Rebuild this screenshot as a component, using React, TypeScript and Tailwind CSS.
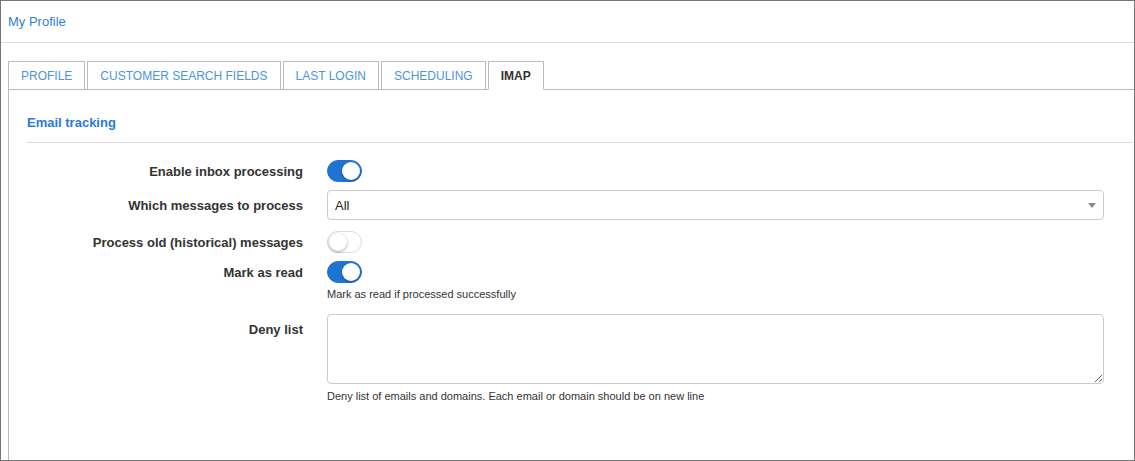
import { useState } from "react";

const tabs = ["Profile", "Customer search fields", "Last login", "Scheduling", "IMAP"];

function Toggle({ on, onClick }: { on: boolean; onClick: () => void }) {
  return (
    <button
      type="button"
      onClick={onClick}
      className={
        on
          ? "relative w-[35px] h-[22px] rounded-full bg-[#1f73d1] border border-[#1f73d1]"
          : "relative w-[35px] h-[22px] rounded-full bg-white border border-[#dcdcdc]"
      }
    >
      <span
        className={
          on
            ? "absolute top-[1px] right-[1px] w-[18px] h-[18px] rounded-full bg-white shadow-[0_1px_2px_rgba(0,0,0,0.3)]"
            : "absolute top-[1px] left-[1px] w-[18px] h-[18px] rounded-full bg-white shadow-[0_1px_3px_rgba(0,0,0,0.35)]"
        }
      />
    </button>
  );
}

function Label({ children }: { children: React.ReactNode }) {
  return (
    <div className="w-[276px] shrink-0 text-right text-[13px] font-bold text-[#333] pt-[2px]">
      {children}
    </div>
  );
}

export default function App() {
  const [active, setActive] = useState("IMAP");
  const [inbox, setInbox] = useState(true);
  const [old, setOld] = useState(false);
  const [markRead, setMarkRead] = useState(true);

  return (
    <div
      className="w-[1135px] h-[461px] border border-[#777] bg-white flex flex-col overflow-hidden"
      style={{ fontFamily: '"Liberation Sans", Arial, sans-serif' }}
    >
      <div className="h-[42px] shrink-0 flex items-center px-[7px] border-b border-[#ddd]">
        <span className="text-[13px] text-[#2f7fd8]">My Profile</span>
      </div>

      <div className="flex-1 flex flex-col pl-[7px] pt-[18px]">
        <div className="flex gap-[2px] relative z-10 -mb-px">
          {tabs.map((t) => {
            const isActive = t === active;
            return (
              <button
                key={t}
                type="button"
                onClick={() => setActive(t)}
                className={
                  isActive
                    ? "h-[29px] px-3 border border-[#bbb] border-b-white bg-white text-[12px] uppercase font-bold text-[#333]"
                    : "h-[29px] px-3 border border-[#bbb] border-b-[#bbb] bg-white text-[12px] uppercase text-[#4d94dc]"
                }
              >
                {t}
              </button>
            );
          })}
        </div>

        <div className="flex-1 border-l border-t border-[#bbb] pl-[18px]">
          <div className="pt-[25px] leading-[16px] text-[13px] font-bold text-[#2a7ad8] mb-[11px]">
            Email tracking
          </div>
          <div className="h-px bg-[#ddd]" />

          <div className="pr-[30px] pt-[17px] flex flex-col">
            <div className="flex items-center gap-6 h-[22px]">
              <Label>Enable inbox processing</Label>
              <Toggle on={inbox} onClick={() => setInbox(!inbox)} />
            </div>

            <div className="flex items-center gap-6 mt-[8px]">
              <Label>Which messages to process</Label>
              <div className="relative flex-1 h-[30px] border border-[#ccc] rounded-[4px] flex items-center pl-[7px]">
                <span className="text-[13px] text-[#222] pt-[1px]">All</span>
                <span className="absolute right-[7px] top-[12px] w-0 h-0 border-l-[4px] border-r-[4px] border-t-[5px] border-l-transparent border-r-transparent border-t-[#888]" />
              </div>
            </div>

            <div className="flex items-center gap-6 h-[22px] mt-[11px]">
              <Label>Process old (historical) messages</Label>
              <Toggle on={old} onClick={() => setOld(!old)} />
            </div>

            <div className="flex items-center gap-6 h-[22px] mt-[8px]">
              <Label>Mark as read</Label>
              <Toggle on={markRead} onClick={() => setMarkRead(!markRead)} />
            </div>
            <div className="flex gap-6 mt-[5px]">
              <div className="w-[276px] shrink-0" />
              <div className="text-[11px] leading-[13px] text-[#333]">Mark as read if processed successfully</div>
            </div>

            <div className="flex gap-6 mt-[13px]">
              <div className="w-[276px] shrink-0 text-right text-[13px] font-bold text-[#333] pt-[6px]">
                Deny list
              </div>
              <textarea className="flex-1 h-[70px] border border-[#ccc] rounded-[4px] outline-none p-2 text-[13px]" />
            </div>
            <div className="flex gap-6 mt-[6px]">
              <div className="w-[276px] shrink-0" />
              <div className="text-[11px] leading-[13px] text-[#333]">
                Deny list of emails and domains. Each email or domain should be on new line
              </div>
            </div>
          </div>
        </div>
      </div>
    </div>
  );
}
